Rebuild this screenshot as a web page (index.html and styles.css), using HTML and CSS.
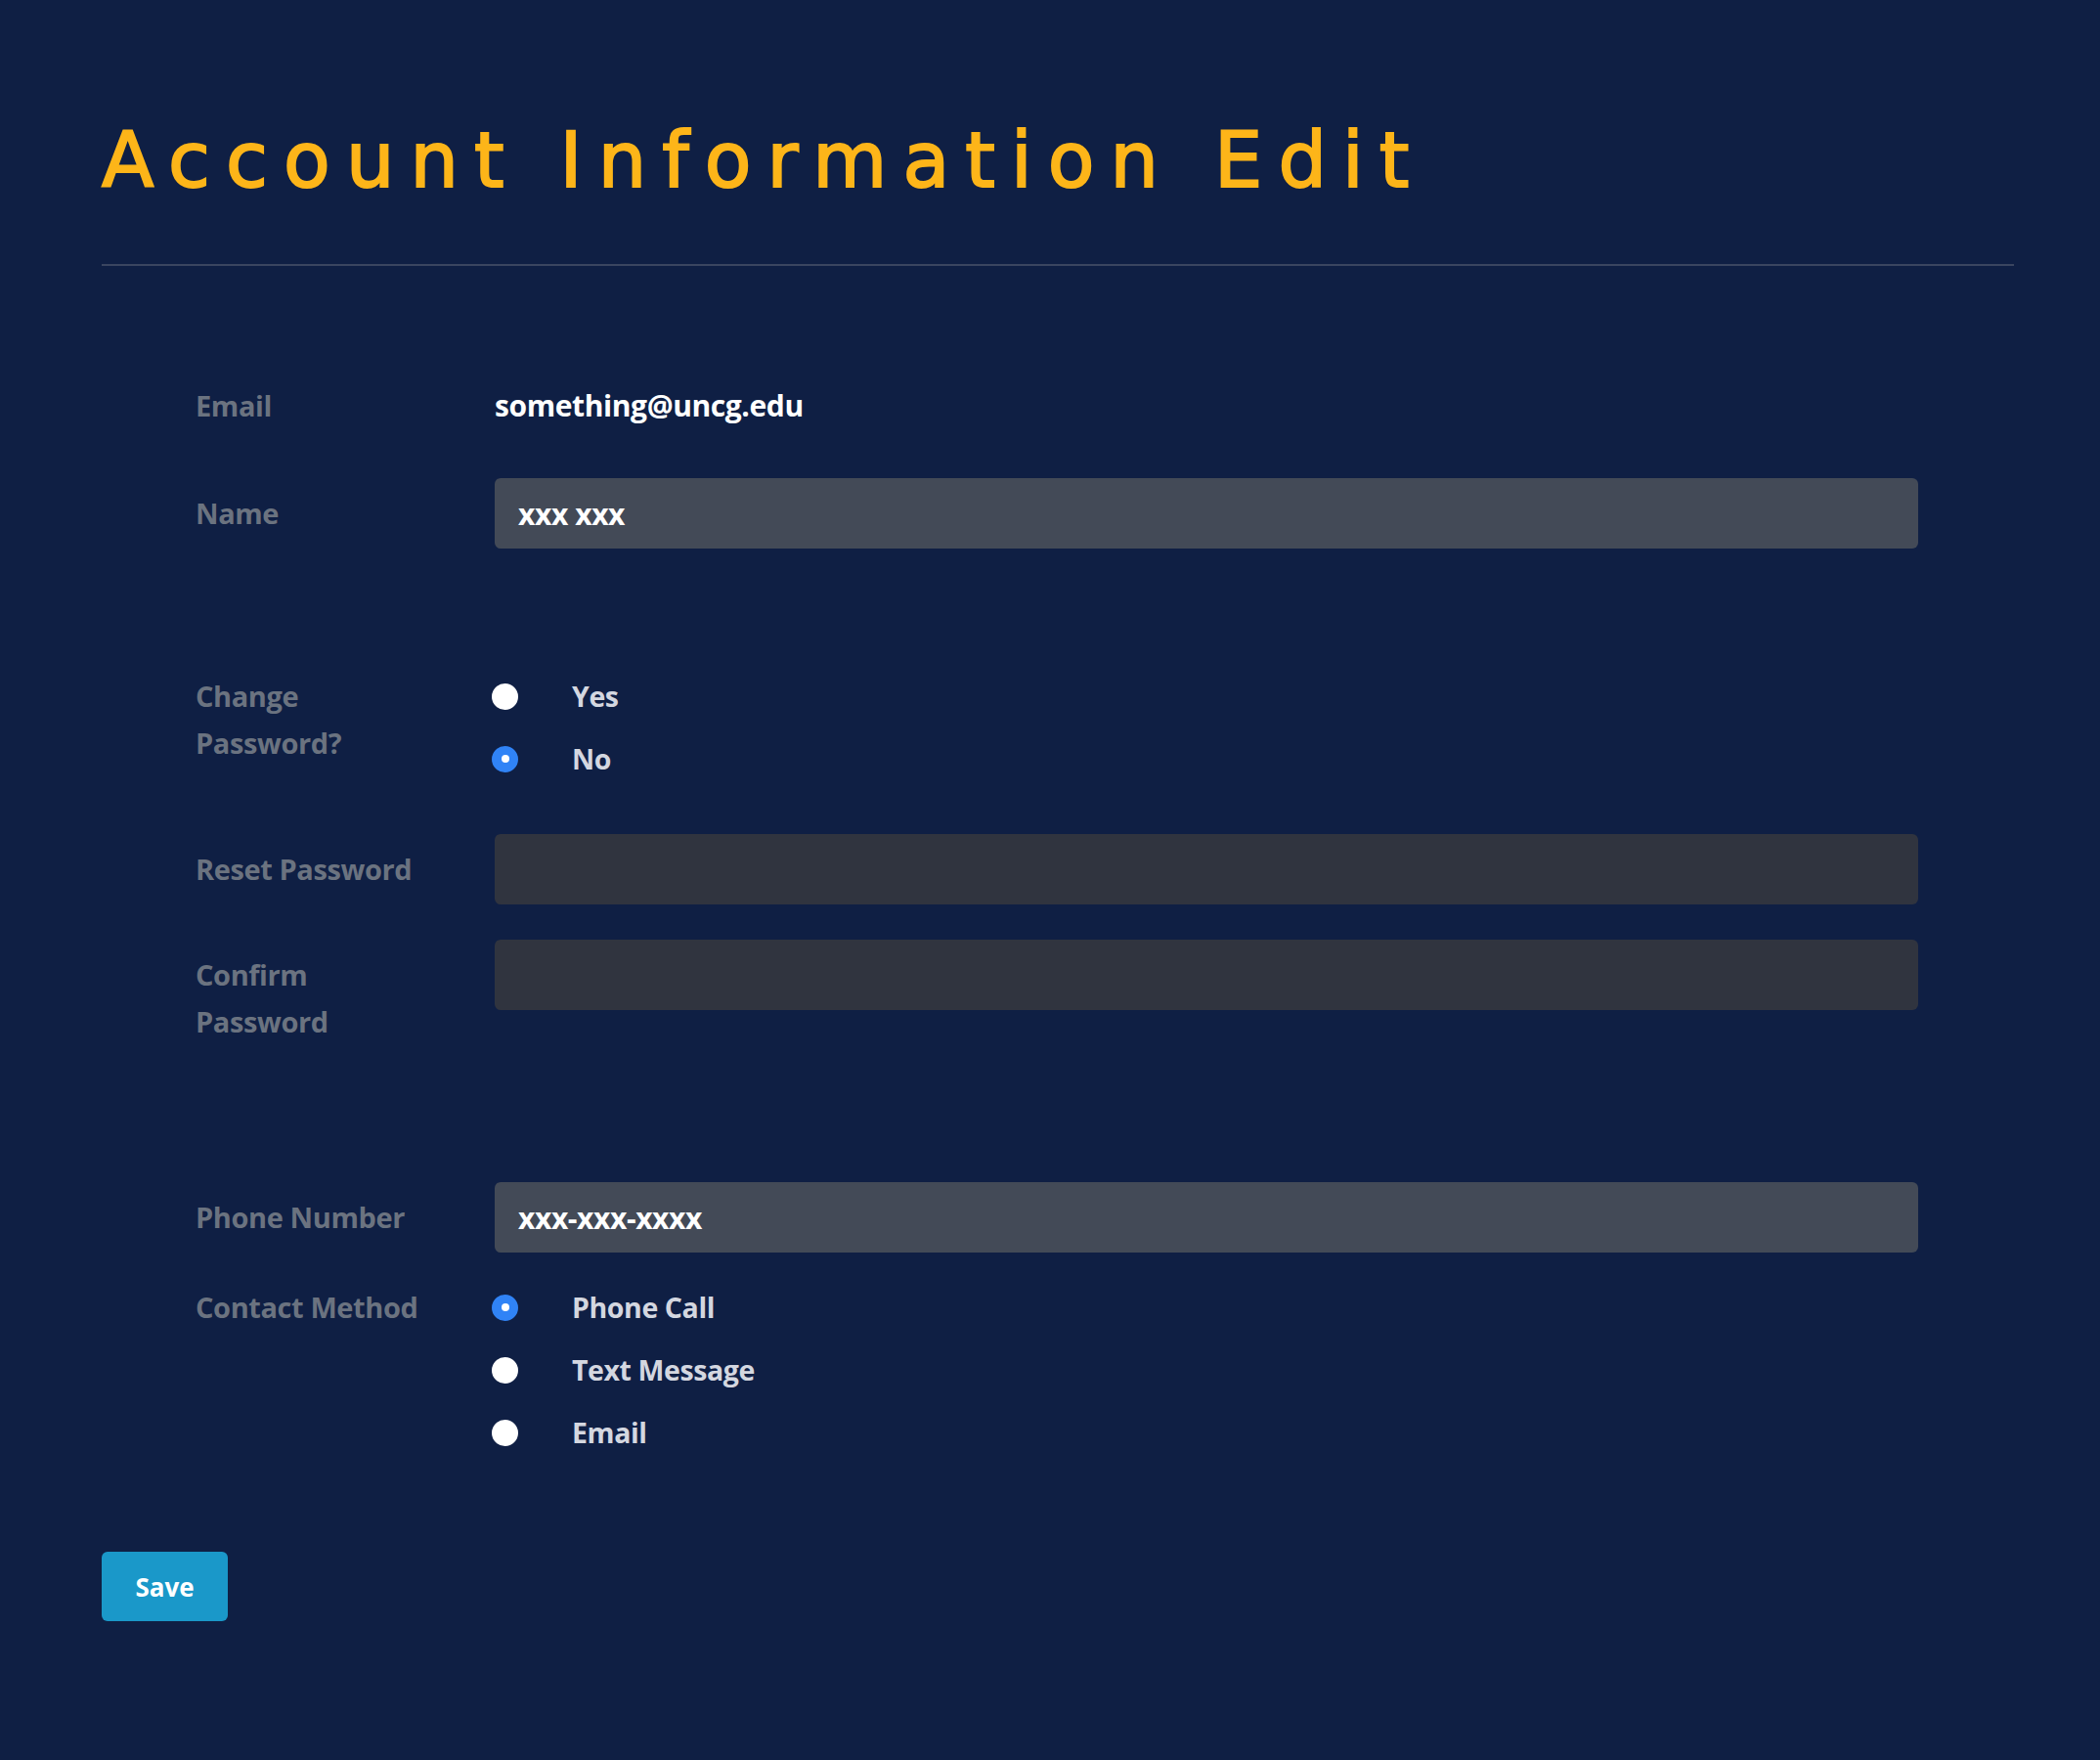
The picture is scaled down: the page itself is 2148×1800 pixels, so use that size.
FILE: index.html
```html
<!DOCTYPE html>
<html lang="en">
<head>
<meta charset="utf-8">
<title>Account Information Edit</title>
<link rel="stylesheet" href="styles.css">
</head>
<body>
<main class="page">
  <h1 class="title">Account Information Edit</h1>
  <hr class="rule">
  <form class="form">
    <div class="row row-email">
      <div class="label">Email</div>
      <div class="value">something@uncg.edu</div>
    </div>
    <div class="row row-name">
      <div class="label label-input">Name</div>
      <div class="field field-light">xxx xxx</div>
    </div>
    <div class="row row-change">
      <div class="label label-radio">Change<br>Password?</div>
      <div class="options">
        <div class="option"><span class="radio"></span><span class="opt-text">Yes</span></div>
        <div class="option"><span class="radio checked"></span><span class="opt-text">No</span></div>
      </div>
    </div>
    <div class="row row-reset">
      <div class="label label-input">Reset Password</div>
      <div class="field field-dark"></div>
    </div>
    <div class="row row-confirm">
      <div class="label label-input">Confirm<br>Password</div>
      <div class="field field-dark"></div>
    </div>
    <div class="row row-phone">
      <div class="label label-input">Phone Number</div>
      <div class="field field-light">xxx-xxx-xxxx</div>
    </div>
    <div class="row row-contact">
      <div class="label label-radio">Contact Method</div>
      <div class="options">
        <div class="option"><span class="radio checked"></span><span class="opt-text">Phone Call</span></div>
        <div class="option"><span class="radio"></span><span class="opt-text">Text Message</span></div>
        <div class="option"><span class="radio"></span><span class="opt-text">Email</span></div>
      </div>
    </div>
  </form>
  <button class="save" type="button">Save</button>
</main>
</body>
</html>
```

FILE: styles.css
```css
html, body {
  margin: 0;
  padding: 0;
  background: #0f1f44;
}

body {
  min-height: 1800px;
  font-family: "Open Sans", "Noto Sans", sans-serif;
}

.page {
  padding: 0 88px 0 104px;
}

.title {
  margin: 0;
  padding-top: 114px;
  font-family: "DejaVu Sans", sans-serif;
  font-weight: 400;
  font-size: 78px;
  line-height: 100px;
  letter-spacing: 16.1px;
  color: #fdb519;
  -webkit-text-stroke: 2px #fdb519;
}

.rule {
  margin: 56px 0 0 0;
  border: 0;
  height: 2px;
  background: #3a4560;
}

.form {
  padding: 0 98px 0 96px;
  display: flex;
  flex-direction: column;
}

.row {
  display: flex;
  align-items: flex-start;
}

.label {
  width: 306px;
  flex: none;
  font-size: 29px;
  font-weight: 700;
  line-height: 48px;
  color: #6b7380;
  letter-spacing: -0.4px;
}

.label-input {
  padding-top: 12px;
}

.value {
  font-size: 30px;
  font-weight: 700;
  line-height: 48px;
  color: #ffffff;
  letter-spacing: -0.4px;
}

.field {
  flex: 1;
  height: 72px;
  box-sizing: border-box;
  border-radius: 6px;
  padding: 0 24px;
  display: flex;
  align-items: center;
  font-size: 30px;
  font-weight: 700;
  color: #ffffff;
  letter-spacing: -0.4px;
}

.field-light {
  background: #434a57;
}

.field-dark {
  background: #30343f;
}

.options {
  display: flex;
  flex-direction: column;
  gap: 16px;
}

.option {
  display: flex;
  align-items: center;
  height: 48px;
}

.radio {
  width: 27px;
  height: 27px;
  margin-left: -3px;
  border-radius: 50%;
  background: #ffffff;
  box-sizing: border-box;
  flex: none;
}

.radio.checked {
  background: #3083f6;
  position: relative;
}

.radio.checked::after {
  content: "";
  position: absolute;
  left: 50%;
  top: 50%;
  width: 8px;
  height: 8px;
  margin: -4px 0 0 -4px;
  border-radius: 50%;
  background: #ffffff;
}

.opt-text {
  margin-left: 55px;
  font-size: 28.5px;
  font-weight: 700;
  color: #d4d7e0;
  letter-spacing: -0.4px;
}

.row-email {
  margin-top: 119px;
}

.row-name {
  margin-top: 50px;
}

.row-change {
  margin-top: 127px;
}

.row-reset {
  margin-top: 53px;
}

.row-confirm {
  margin-top: 36px;
}

.row-phone {
  margin-top: 140px;
}

.row-contact {
  margin-top: 32px;
}

.save {
  margin-top: 98px;
  width: 129px;
  height: 71px;
  border: 0;
  border-radius: 6px;
  background: #1a98c9;
  color: #ffffff;
  font-family: "Open Sans", "Noto Sans", sans-serif;
  font-size: 26px;
  font-weight: 700;
  cursor: pointer;
}
```
